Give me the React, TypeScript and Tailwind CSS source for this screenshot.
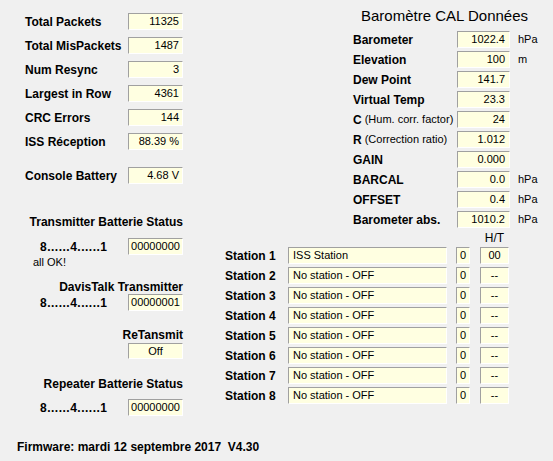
import React from "react";

const box =
  "bg-[#ffffe1] border-t border-l border-r border-b border-t-[#a0a0a0] border-l-[#a0a0a0] border-r-[#ffffff] border-b-[#ffffff] text-[11px] leading-none flex items-center";

const stats: [string, string][] = [
  ["Total Packets", "11325"],
  ["Total MisPackets", "1487"],
  ["Num Resync", "3"],
  ["Largest in Row", "4361"],
  ["CRC Errors", "144"],
  ["ISS Réception", "88.39 %"],
];

const baro: { label: string; note?: string; value: string; unit?: string }[] = [
  { label: "Barometer", value: "1022.4", unit: "hPa" },
  { label: "Elevation", value: "100", unit: "m" },
  { label: "Dew Point", value: "141.7" },
  { label: "Virtual Temp", value: "23.3" },
  { label: "C", note: "(Hum. corr. factor)", value: "24" },
  { label: "R", note: "(Correction ratio)", value: "1.012" },
  { label: "GAIN", value: "0.000" },
  { label: "BARCAL", value: "0.0", unit: "hPa" },
  { label: "OFFSET", value: "0.4", unit: "hPa" },
  { label: "Barometer abs.", value: "1010.2", unit: "hPa" },
];

const stations = [
  { name: "ISS Station", ht: "00" },
  { name: "No station - OFF", ht: "--" },
  { name: "No station - OFF", ht: "--" },
  { name: "No station - OFF", ht: "--" },
  { name: "No station - OFF", ht: "--" },
  { name: "No station - OFF", ht: "--" },
  { name: "No station - OFF", ht: "--" },
  { name: "No station - OFF", ht: "--" },
];

function BitRow({ value }: { value: string }) {
  return (
    <div className="flex items-center h-[17px]">
      <span className="ml-[15px] font-bold text-[12px] tracking-[0.5px]">8......4......1</span>
      <div className={`${box} ml-auto w-[55px] h-[17px] justify-center`}>{value}</div>
    </div>
  );
}

export default function App() {
  return (
    <div className="w-[553px] h-[461px] bg-[#f0f0f0] text-black font-['Liberation_Sans',Arial,sans-serif] flex overflow-hidden">
      {/* Left column: packet stats + battery status */}
      <div className="w-[200px] shrink-0 pl-[25px] flex flex-col">
        <div className="w-[158px] flex flex-col">
          <div className="flex flex-col gap-[7px] pt-[13px]">
            {stats.map(([label, value]) => (
              <div key={label} className="flex items-center justify-between h-[17px]">
                <span className="font-bold text-[12px]">{label}</span>
                <div className={`${box} w-[55px] h-[17px] justify-end pr-[3px]`}>{value}</div>
              </div>
            ))}
          </div>

          <div className="flex items-center justify-between h-[17px] mt-[17px]">
            <span className="font-bold text-[12px]">Console Battery</span>
            <div className={`${box} w-[55px] h-[17px] justify-end pr-[3px]`}>4.68 V</div>
          </div>

          <div className="mt-[31px] h-[14px] leading-[14px] text-right font-bold text-[12px] whitespace-nowrap">
            Transmitter Batterie Status
          </div>
          <div className="mt-[9px]">
            <BitRow value="00000000" />
          </div>
          <div className="mt-[1px] h-[13px] leading-[13px] text-[11px] ml-[8px]">all OK!</div>

          <div className="mt-[12px] h-[13px] leading-[13px] text-right font-bold text-[12px]">
            DavisTalk Transmitter
          </div>
          <BitRow value="00000001" />

          <div className="mt-[17px] h-[14px] leading-[14px] text-right font-bold text-[12px]">ReTansmit</div>
          <div className="mt-[1px] flex justify-end">
            <div className={`${box} w-[55px] h-[16px] justify-center`}>Off</div>
          </div>

          <div className="mt-[18px] h-[14px] leading-[14px] text-right font-bold text-[12px]">
            Repeater Batterie Status
          </div>
          <div className="mt-[8px]">
            <BitRow value="00000000" />
          </div>

          <div className="mt-[24px] -ml-[8px] h-[14px] leading-[14px] font-bold text-[12px] whitespace-pre">
            Firmware: mardi 12 septembre 2017  V4.30
          </div>
        </div>
      </div>

      {/* Right column: barometer calibration + stations */}
      <div className="flex-1 flex flex-col">
        <div className="ml-[153px] flex flex-col">
          <div className="mt-[7px] h-[18px] leading-[18px] text-[15px] pl-[8px] whitespace-nowrap">
            Baromètre CAL Données
          </div>
          <div className="mt-[6px] flex flex-col gap-[3px]">
            {baro.map((r) => (
              <div key={r.label} className="flex items-center h-[17px]">
                <div className="w-[104px] flex items-center whitespace-nowrap">
                  <span className="font-bold text-[12px]">{r.label}</span>
                  {r.note && <span className="ml-[3px] text-[11px]">{r.note}</span>}
                </div>
                <div className={`${box} w-[53px] h-[17px] justify-end pr-[4px]`}>{r.value}</div>
                {r.unit && <span className="ml-[8px] text-[11px]">{r.unit}</span>}
              </div>
            ))}
          </div>
        </div>

        <div className="pl-[25px] mt-[3px] flex flex-col">
          <div className="h-[16px] flex">
            <span className="ml-[255px] w-[29px] text-center text-[12px] leading-[14px]">H/T</span>
          </div>
          <div className="flex flex-col gap-[3px]">
            {stations.map((s, i) => (
              <div key={i} className="flex items-center h-[17px]">
                <span className="w-[63px] font-bold text-[12px]">Station {i + 1}</span>
                <div className={`${box} w-[159px] h-[17px] pl-[4px]`}>{s.name}</div>
                <div className={`${box} ml-[9px] w-[14px] h-[17px] justify-center`}>0</div>
                <div className={`${box} ml-[10px] w-[29px] h-[17px] justify-center`}>{s.ht}</div>
              </div>
            ))}
          </div>
        </div>
      </div>
    </div>
  );
}
